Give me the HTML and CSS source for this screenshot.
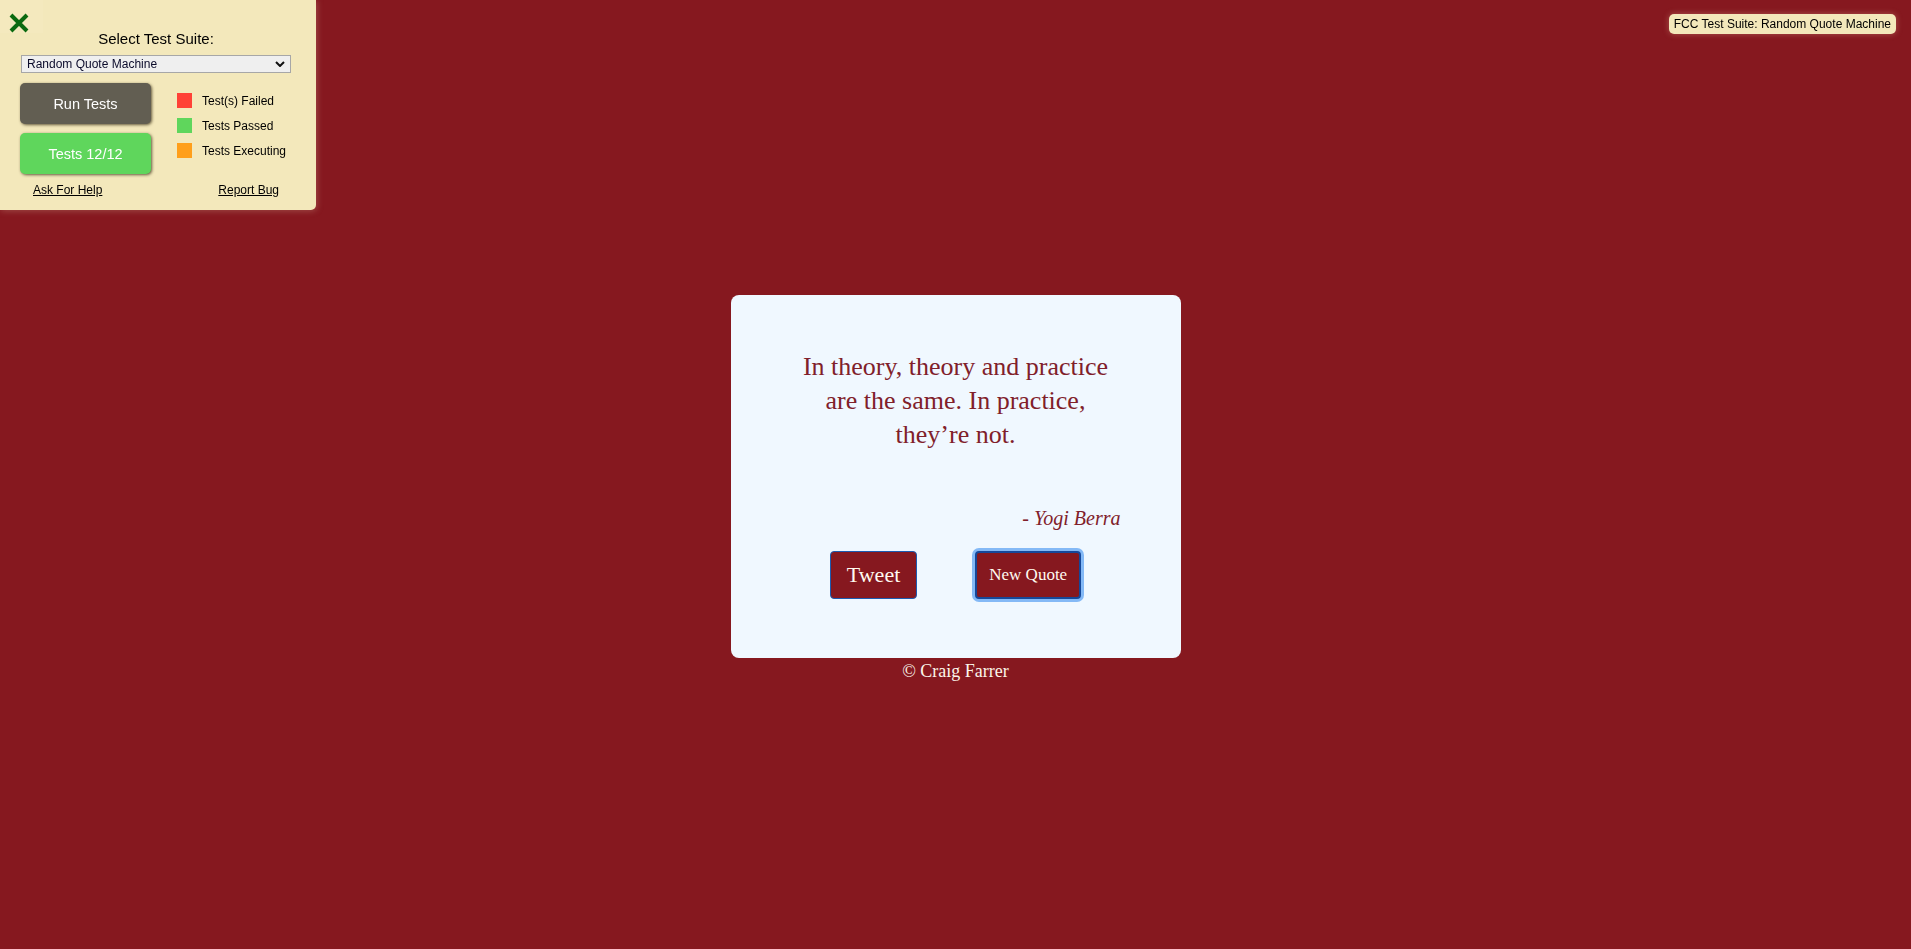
FILE: index.html
```html
<!DOCTYPE html>
<html lang="en">
<head>
<meta charset="utf-8">
<title>Random Quote Machine</title>
<link rel="stylesheet" href="styles.css">
</head>
<body>
<div class="suite">
  <button class="suite-close" aria-label="Close">
    <svg width="20" height="20" viewBox="0 0 20 20"><path d="M2 2 L18 18 M18 2 L2 18" stroke="#0b6a10" stroke-width="4" stroke-linecap="butt" fill="none"/></svg>
  </button>
  <div class="suite-title">Select Test Suite:</div>
  <div class="suite-select">
    <span>Random Quote Machine</span>
    <svg width="10" height="6" viewBox="0 0 10 6"><path d="M1 1 L5 5 L9 1" stroke="#111" stroke-width="2" fill="none"/></svg>
  </div>
  <div class="suite-body">
    <div class="suite-buttons">
      <div class="suite-btn run">Run Tests</div>
      <div class="suite-btn passed">Tests 12/12</div>
    </div>
    <ul class="legend">
      <li><span class="sw fail"></span>Test(s) Failed</li>
      <li><span class="sw pass"></span>Tests Passed</li>
      <li><span class="sw exec"></span>Tests Executing</li>
    </ul>
  </div>
  <div class="suite-links">
    <a href="#">Ask For Help</a>
    <a href="#">Report Bug</a>
  </div>
</div>

<div class="badge">FCC Test Suite: Random Quote Machine</div>

<main class="page">
  <div id="quote-box" class="card">
    <p id="text" class="quote">In theory, theory and practice are the same. In practice, they’re not.</p>
    <p id="author" class="author">- Yogi Berra</p>
    <div class="actions">
      <a id="tweet-quote" class="btn tweet" href="#">Tweet</a>
      <button id="new-quote" class="btn newq">New Quote</button>
    </div>
  </div>
  <footer class="footer">© Craig Farrer</footer>
</main>
</body>
</html>
```
FILE: styles.css
```css
* { box-sizing: border-box; }
html, body { margin: 0; padding: 0; }
body {
  background: #86181f;
  font-family: "Liberation Serif", "Times New Roman", serif;
  min-height: 100vh;
}

/* ---------- test suite panel ---------- */
.suite {
  position: fixed;
  top: 0;
  left: 0;
  width: 316px;
  height: 210px;
  background: rgba(255, 255, 204, 0.9);
  border-bottom-right-radius: 5px;
  box-shadow: 1px 1px 6px rgba(210, 170, 150, 0.35);
  font-family: "Liberation Sans", Arial, sans-serif;
  color: #000;
  z-index: 10;
}
.suite-close {
  position: absolute;
  top: 0;
  left: 0;
  width: 43px;
  height: 33px;
  border: 0;
  padding: 12px 0 0 9px;
  background: rgba(255, 255, 255, 0.05);
  display: block;
  text-align: left;
  cursor: pointer;
}
.suite-close svg { display: block; }
.suite-title {
  padding-top: 30px;
  text-align: center;
  font-size: 15px;
  line-height: 17px;
  margin-left: -4px;
}
.suite-select {
  margin: 8px 0 0 21px;
  width: 270px;
  height: 18px;
  border: 1px solid #a7a7a7;
  background: #efefef;
  display: flex;
  align-items: center;
  justify-content: space-between;
  padding: 0 5px 0 5px;
  font-size: 12px;
  color: #0a0a2a;
}
.suite-select svg { display: block; }
.suite-body {
  display: flex;
  padding: 10px 0 0 20px;
  gap: 26px;
}
.suite-buttons {
  display: flex;
  flex-direction: column;
  gap: 9px;
}
.suite-btn {
  width: 131px;
  height: 41px;
  border-radius: 5px;
  color: #fff;
  font-size: 14.5px;
  display: flex;
  align-items: center;
  justify-content: center;
  box-shadow: 1px 1px 3px rgba(40, 30, 10, 0.7);
}
.suite-btn.run { background: #625e52; }
.suite-btn.passed { background: #5fd65c; height: 41px; }
.legend {
  list-style: none;
  margin: 0;
  padding: 10px 0 0 0;
  display: flex;
  flex-direction: column;
  gap: 10px;
  font-size: 12px;
}
.legend li {
  display: flex;
  align-items: center;
  height: 15px;
  gap: 10px;
}
.sw { width: 15px; height: 15px; display: block; }
.sw.fail { background: #ff4136; }
.sw.pass { background: #5fd65c; }
.sw.exec { background: #ff9f1a; }
.suite-links {
  display: flex;
  justify-content: space-between;
  padding: 9px 37px 0 33px;
  font-size: 12px;
  line-height: 14px;
}
.suite-links a { color: #000; text-decoration: underline; }

/* ---------- badge ---------- */
.badge {
  position: fixed;
  top: 14px;
  right: 15px;
  height: 20px;
  line-height: 20px;
  padding: 0 5px;
  background: rgba(255, 255, 204, 0.9);
  border-radius: 5px;
  box-shadow: 0 0 6px rgba(240, 200, 170, 0.35);
  font-family: "Liberation Sans", Arial, sans-serif;
  font-size: 12px;
  color: #000;
}

/* ---------- quote card ---------- */
.page {
  display: flex;
  flex-direction: column;
  align-items: center;
  padding-top: 295px;
}
.card {
  width: 450px;
  background: #f0f8ff;
  border-radius: 8px;
  padding: 55px 60px 59px;
  color: #80202a;
}
.quote {
  margin: 0;
  text-align: center;
  font-size: 26px;
  line-height: 34px;
}
.author {
  margin: 55px 0 0;
  text-align: right;
  font-style: italic;
  font-size: 20px;
  line-height: 23px;
}
.actions {
  display: flex;
  justify-content: center;
  gap: 58px;
  margin-top: 21px;
}
.btn {
  height: 48px;
  background: #86181f;
  color: #fffaf0;
  border: 1px solid #1c5bb0;
  border-radius: 4px;
  display: flex;
  align-items: center;
  justify-content: center;
  font-family: "Liberation Serif", "Times New Roman", serif;
  text-decoration: none;
}
.btn.tweet { font-size: 22px; padding: 0 16px; }
.btn.newq {
  font-size: 17px;
  padding: 0 12px;
  border: 2px solid #15489a;
  box-shadow: 0 0 0 3px #84b9f6;
}
.footer {
  color: #fbf5ea;
  font-size: 18px;
  line-height: 21px;
  margin-top: 3px;
  text-align: center;
}
```
